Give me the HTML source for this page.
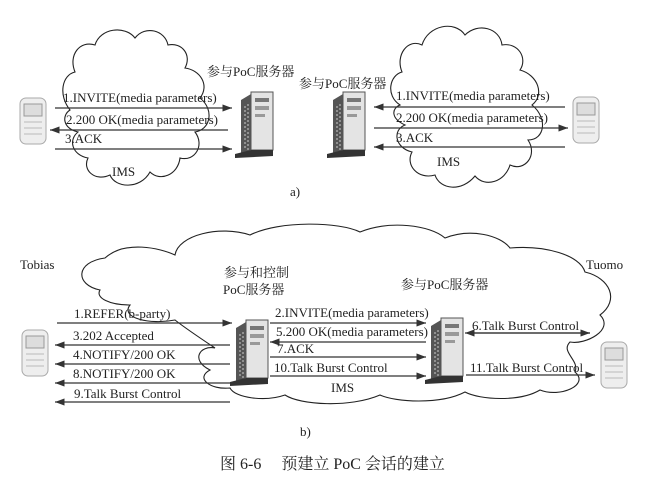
<!DOCTYPE html>
<html><head><meta charset="utf-8"><style>
html,body{margin:0;padding:0;background:#fff;}
svg{display:block}
text{font-family:"Liberation Serif","Noto Serif CJK SC",serif;fill:#222;}
</style></head><body>
<svg width="655" height="478" viewBox="0 0 655 478" xmlns="http://www.w3.org/2000/svg">
<defs>
<marker id="a" markerWidth="8" markerHeight="6" refX="8" refY="3" orient="auto"><path d="M0,0 L8,3 L0,6 Z" fill="#333"/></marker>
<g id="srv">
  <path d="M0,8 L10,2 L10,58 L0,62 Z" fill="#555"/>
  <rect x="10" y="0" width="22" height="58" fill="#e4e4e4" stroke="#555" stroke-width="1"/>
  <rect x="14" y="6" width="14" height="4" fill="#777"/>
  <rect x="14" y="14" width="14" height="4" fill="#999"/>
  <rect x="14" y="22" width="10" height="3" fill="#999"/>
  <path d="M4,14 L4,58 M7,12 L7,58" stroke="#ccc" stroke-width="1" stroke-dasharray="2,2"/>
  <path d="M-6,62 L10,58 L32,58 L32,64 L-6,66 Z" fill="#333"/>
</g>
<g id="ph">
  <rect x="0" y="0" width="26" height="46" rx="6" fill="#eee" stroke="#aaa"/>
  <rect x="4" y="6" width="18" height="12" fill="#ddd" stroke="#999"/>
  <path d="M4,24 h18 M4,30 h18 M4,36 h18" stroke="#bbb"/>
</g>
</defs>
<g fill="none" stroke="#222" stroke-width="1.1">
<!-- top-left cloud -->
<path d="M70,110 C58,95 62,75 75,72 C68,55 80,40 95,45 C100,28 125,25 135,38 C145,25 165,30 168,45 C182,42 192,55 185,68 C200,70 210,85 200,98 C215,110 210,130 195,132 C205,145 195,162 180,158 C178,175 160,182 150,172 C140,190 115,188 110,175 C95,182 82,170 88,158 C72,155 68,140 78,132 C62,128 62,115 70,110 Z"/>
<!-- top-right cloud -->
<path d="M400,105 C385,95 390,75 402,72 C395,55 408,38 422,45 C428,25 455,20 465,35 C478,22 500,28 502,45 C518,42 528,58 520,70 C538,75 545,95 532,105 C548,118 545,140 528,140 C538,155 525,172 510,165 C505,182 485,188 475,176 C462,192 440,190 435,175 C418,180 405,165 412,152 C395,148 392,130 405,125 C390,118 392,108 400,105 Z"/>
<!-- bottom cloud -->
<path d="M100,290 C75,285 75,262 105,258 C125,240 160,248 175,255 C178,235 220,225 250,235 C280,220 340,222 360,232 C390,220 430,225 445,238 C470,228 500,235 510,248 C545,245 580,255 585,272 C610,278 620,300 600,315 C615,330 585,345 570,342 C560,352 580,360 575,372 C590,385 560,398 540,390 C520,402 480,400 465,392 C440,405 395,402 380,395 C350,408 300,405 285,395 C265,402 235,398 230,388 C210,390 195,378 210,370 C190,360 200,345 215,348 C200,338 185,328 175,320 C150,325 120,318 130,305 C110,305 95,298 100,290 Z"/>
</g>
<!-- top-left -->
<use href="#ph" x="20" y="98"/>
<use href="#srv" x="241" y="92"/>
<g stroke="#333" stroke-width="1.2">
<line x1="55" y1="108" x2="232" y2="108" marker-end="url(#a)"/>
<line x1="228" y1="130" x2="50" y2="130" marker-end="url(#a)"/>
<line x1="55" y1="149" x2="232" y2="149" marker-end="url(#a)"/>
</g>
<g font-size="13">
<text x="63" y="102">1.INVITE(media parameters)</text>
<text x="66" y="124">2.200 OK(media parameters)</text>
<text x="65" y="143">3.ACK</text>
<text x="112" y="176">IMS</text>
<text x="207" y="76">参与PoC服务器</text>
<text x="290" y="196">a)</text>
</g>
<!-- top-right -->
<use href="#srv" x="333" y="92"/>
<use href="#ph" x="573" y="97"/>
<g stroke="#333" stroke-width="1.2">
<line x1="565" y1="107" x2="374" y2="107" marker-end="url(#a)"/>
<line x1="374" y1="128" x2="568" y2="128" marker-end="url(#a)"/>
<line x1="565" y1="147" x2="374" y2="147" marker-end="url(#a)"/>
</g>
<g font-size="13">
<text x="396" y="100">1.INVITE(media parameters)</text>
<text x="396" y="122">2.200 OK(media parameters)</text>
<text x="396" y="142">3.ACK</text>
<text x="437" y="166">IMS</text>
<text x="299" y="88">参与PoC服务器</text>
</g>
<!-- bottom -->
<use href="#ph" x="22" y="330"/>
<use href="#ph" x="601" y="342"/>
<use href="#srv" x="236" y="320"/>
<use href="#srv" x="431" y="318"/>
<g stroke="#333" stroke-width="1.2">
<line x1="57" y1="323" x2="232" y2="323" marker-end="url(#a)"/>
<line x1="230" y1="345" x2="55" y2="345" marker-end="url(#a)"/>
<line x1="230" y1="364" x2="55" y2="364" marker-end="url(#a)"/>
<line x1="230" y1="383" x2="55" y2="383" marker-end="url(#a)"/>
<line x1="230" y1="402" x2="55" y2="402" marker-end="url(#a)"/>
<line x1="270" y1="323" x2="426" y2="323" marker-end="url(#a)"/>
<line x1="426" y1="342" x2="270" y2="342" marker-end="url(#a)"/>
<line x1="270" y1="357" x2="426" y2="357" marker-end="url(#a)"/>
<line x1="270" y1="376" x2="426" y2="376" marker-end="url(#a)"/>
<line x1="468" y1="333" x2="590" y2="333" marker-end="url(#a)"/>
<line x1="590" y1="333" x2="465" y2="333" marker-end="url(#a)"/>
<line x1="466" y1="375" x2="595" y2="375" marker-end="url(#a)"/>
</g>
<g font-size="13">
<text x="20" y="269">Tobias</text>
<text x="586" y="269">Tuomo</text>
<text x="224" y="277">参与和控制</text>
<text x="223" y="294">PoC服务器</text>
<text x="401" y="289">参与PoC服务器</text>
<text x="74" y="318">1.REFER(b-party)</text>
<text x="73" y="340">3.202 Accepted</text>
<text x="73" y="359">4.NOTIFY/200 OK</text>
<text x="73" y="378">8.NOTIFY/200 OK</text>
<text x="74" y="398">9.Talk Burst Control</text>
<text x="275" y="317">2.INVITE(media parameters)</text>
<text x="276" y="336">5.200 OK(media parameters)</text>
<text x="277" y="353">7.ACK</text>
<text x="274" y="372">10.Talk Burst Control</text>
<text x="472" y="330">6.Talk Burst Control</text>
<text x="470" y="372">11.Talk Burst Control</text>
<text x="331" y="392">IMS</text>
<text x="300" y="436">b)</text>
</g>
<text x="220" y="469" font-size="16">图 6-6　 预建立 PoC 会话的建立</text>
</svg>
</body></html>
